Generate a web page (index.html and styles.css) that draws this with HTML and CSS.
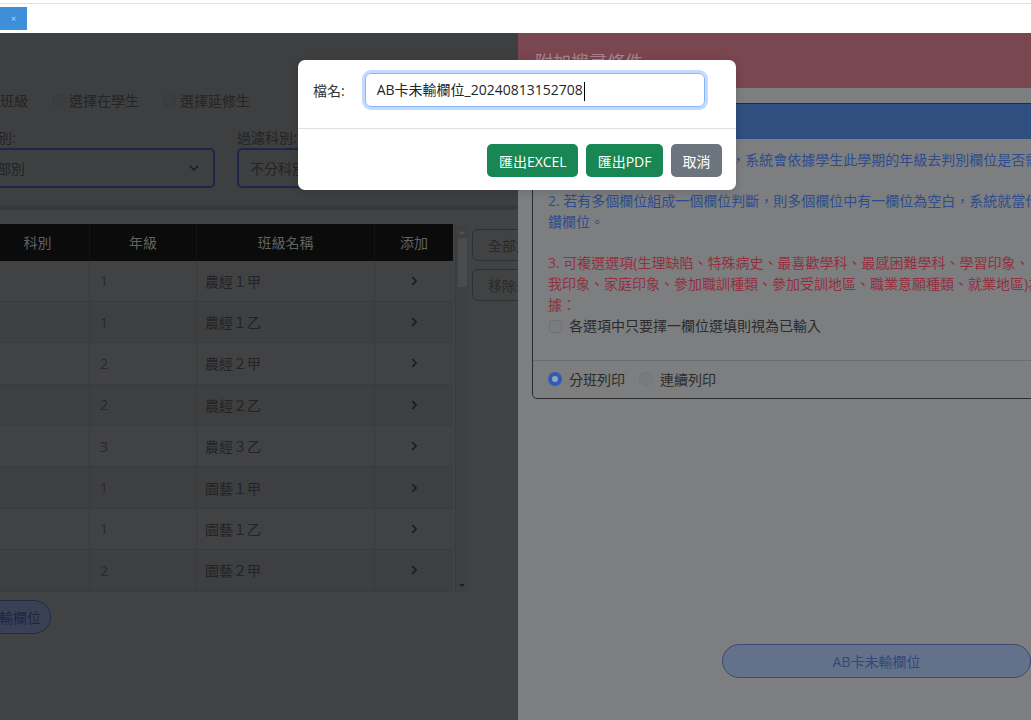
FILE: index.html
```html
<!DOCTYPE html>
<html lang="zh-Hant">
<head>
<meta charset="utf-8">
<title>AB卡未輸欄位</title>
<link rel="stylesheet" href="styles.css">
</head>
<body>
<div class="topbar">
  <div class="topbar-inner"><button class="xbtn">×</button></div>
</div>
<div class="main">
  <div class="left">
    <div class="left-inner">
      <div class="left-top">
        <div class="radios">
          <label class="ritem"><span class="rdot"></span>選擇班級</label>
          <label class="ritem"><span class="rdot"></span>選擇在學生</label>
          <label class="ritem"><span class="rdot"></span>選擇延修生</label>
        </div>
        <div class="filters">
          <div class="fcol">
            <div class="flabel">過濾部別:</div>
            <div class="fselect"><span>不分部別</span>
              <svg class="chev" width="10" height="6" viewBox="0 0 10 6"><path d="M1 1 L5 5 L9 1" fill="none" stroke="#1b1b1b" stroke-width="1.5"/></svg>
            </div>
          </div>
          <div class="fcol">
            <div class="flabel">過濾科別:</div>
            <div class="fselect"><span>不分科別</span>
              <svg class="chev" width="10" height="6" viewBox="0 0 10 6"><path d="M1 1 L5 5 L9 1" fill="none" stroke="#1b1b1b" stroke-width="1.5"/></svg>
            </div>
          </div>
        </div>
      </div>
      <div class="table-area">
        <div class="grid">
          <div class="grow ghead"><div>科別</div><div>年級</div><div>班級名稱</div><div>添加</div></div>
          <div class="grow"><div></div><div class="gr">1</div><div class="gn">農經１甲</div><div class="ga"><svg width="8" height="12" viewBox="0 0 8 12"><path d="M2.2 2 L6 6 L2.2 10" fill="none" stroke="#1c1c1c" stroke-width="1.7"/></svg></div></div>
          <div class="grow alt"><div></div><div class="gr">1</div><div class="gn">農經１乙</div><div class="ga"><svg width="8" height="12" viewBox="0 0 8 12"><path d="M2.2 2 L6 6 L2.2 10" fill="none" stroke="#1c1c1c" stroke-width="1.7"/></svg></div></div>
          <div class="grow"><div></div><div class="gr">2</div><div class="gn">農經２甲</div><div class="ga"><svg width="8" height="12" viewBox="0 0 8 12"><path d="M2.2 2 L6 6 L2.2 10" fill="none" stroke="#1c1c1c" stroke-width="1.7"/></svg></div></div>
          <div class="grow alt"><div></div><div class="gr">2</div><div class="gn">農經２乙</div><div class="ga"><svg width="8" height="12" viewBox="0 0 8 12"><path d="M2.2 2 L6 6 L2.2 10" fill="none" stroke="#1c1c1c" stroke-width="1.7"/></svg></div></div>
          <div class="grow"><div></div><div class="gr">3</div><div class="gn">農經３乙</div><div class="ga"><svg width="8" height="12" viewBox="0 0 8 12"><path d="M2.2 2 L6 6 L2.2 10" fill="none" stroke="#1c1c1c" stroke-width="1.7"/></svg></div></div>
          <div class="grow alt"><div></div><div class="gr">1</div><div class="gn">園藝１甲</div><div class="ga"><svg width="8" height="12" viewBox="0 0 8 12"><path d="M2.2 2 L6 6 L2.2 10" fill="none" stroke="#1c1c1c" stroke-width="1.7"/></svg></div></div>
          <div class="grow"><div></div><div class="gr">1</div><div class="gn">園藝１乙</div><div class="ga"><svg width="8" height="12" viewBox="0 0 8 12"><path d="M2.2 2 L6 6 L2.2 10" fill="none" stroke="#1c1c1c" stroke-width="1.7"/></svg></div></div>
          <div class="grow alt"><div></div><div class="gr">2</div><div class="gn">園藝２甲</div><div class="ga"><svg width="8" height="12" viewBox="0 0 8 12"><path d="M2.2 2 L6 6 L2.2 10" fill="none" stroke="#1c1c1c" stroke-width="1.7"/></svg></div></div>
        </div>
        <div class="vscroll">
          <span class="arrow-up"></span>
          <span class="thumb"></span>
          <span class="vspace"></span>
          <span class="arrow-down"></span>
        </div>
        <div class="side">
          <button class="sbtn">全部加入</button>
          <button class="sbtn">移除全部</button>
        </div>
      </div>
      <div class="lpill-row"><button class="lpill">AB卡未輸欄位</button></div>
    </div>
  </div>
  <div class="right">
    <div class="rhead">附加搜尋條件</div>
    <div class="card">
      <div class="card-head"></div>
      <div class="card-body">
        <div class="blue">1. 依年級判斷欄位是否需要填，系統會依據學生此學期的年級去判別欄位是否需</div>
        <div class="blue">要填寫此欄位。</div>
        <div class="blue">2. 若有多個欄位組成一個欄位判斷，則多個欄位中有一欄位為空白，系統就當作未填</div>
        <div class="blue">鑽欄位。</div>
        <div class="blank">&nbsp;</div>
        <div class="red">3. 可複選選項(生理缺陷、特殊病史、最喜歡學科、最感困難學科、學習印象、自</div>
        <div class="red">我印象、家庭印象、參加職訓種類、參加受訓地區、職業意願種類、就業地區)為判斷依</div>
        <div class="red">據：</div>
        <label class="chk"><span class="cbox"></span>各選項中只要擇一欄位選填則視為已輸入</label>
      </div>
      <div class="card-foot">
        <label class="fitem"><span class="frad on"></span>分班列印</label>
        <label class="fitem"><span class="frad"></span>連續列印</label>
      </div>
    </div>
    <div class="rbtn-row"><button class="rbtn">AB卡未輸欄位</button></div>
  </div>
</div>

<div class="modal">
  <div class="mbody">
    <span class="mlabel">檔名:</span>
    <div class="finput">AB卡未輸欄位_20240813152708<span class="caret"></span></div>
  </div>
  <div class="mfoot">
    <button class="btn green">匯出EXCEL</button>
    <button class="btn green">匯出PDF</button>
    <button class="btn gray">取消</button>
  </div>
</div>
</body>
</html>
```
FILE: styles.css
```css
* { box-sizing: border-box; }
html, body { margin: 0; padding: 0; }
body {
  width: 1031px;
  height: 720px;
  overflow: hidden;
  position: relative;
  background: #fff;
  font-family: "Open Sans", "Noto Sans CJK TC", sans-serif;
  font-size: 14px;
  color: #212529;
}
button { font-family: inherit; font-size: 14px; cursor: default; }

/* top strip */
.topbar { height: 33px; padding-top: 3px; background: #fff; }
.topbar-inner { height: 30px; border-top: 1px solid #e2e2e2; padding-top: 3px; }
.xbtn {
  display: block;
  width: 27px; height: 23px;
  border: none; padding: 0;
  background: #3d8fd8;
  color: #b9d6f3;
  font-size: 9px; line-height: 23px;
}

.main { display: flex; height: 687px; }

/* left panel */
.left { width: 518px; flex: none; overflow: hidden; background: #414243; }
.left-inner { margin-left: -44px; width: 620px; }
.left-top {
  background: #3e3f40;
  padding: 57px 0 17px;
  border-bottom: 5px solid #39393a;
}
.radios { display: flex; gap: 24px; margin-left: -1px; line-height: 21px; color: #242424; }
.ritem { display: flex; align-items: center; gap: 4px; }
.rdot {
  width: 13px; height: 13px; border-radius: 50%;
  border: 1px solid #38393a; background: #3c3d3e;
}
.filters { display: flex; gap: 22px; margin-top: 15.5px; }
.fcol { width: 259px; }
.flabel { line-height: 21px; color: #242424; }
.fselect {
  height: 40px;
  border: 2px solid #1e274b;
  border-radius: 5px;
  display: flex; align-items: center; justify-content: space-between;
  padding: 0 14px 0 11px;
  color: #242424;
}
.chev { display: block; }

.table-area { display: flex; align-items: flex-start; padding-top: 14px; margin-left: 30px; }
.grid { width: 467px; flex: none; }
.grow {
  display: grid;
  grid-template-columns: 104px 107px 178px 78px;
  height: 41.375px;
  border-bottom: 1px solid #3a3b3c;
  color: #262626;
}
.grow.alt { background: #3e3f40; }
.grow > div { border-right: 1px solid #393a3b; display: flex; align-items: center; }
.grow > div:last-child { border-right: none; }
.ghead { height: 37px; background: #0b0b0b; color: #626262; border-bottom: none; }
.ghead > div { justify-content: center; border-right-color: #141414; }
.gr { padding-left: 10px; color: #2c2828; }
.gn { padding-left: 8px; color: #232323; }
.ga { justify-content: center; }
.ga svg { display: block; }

.vscroll {
  width: 13px; height: 366px; margin: 2px 0 0 2px; flex: none;
  background: #3f4041;
  border-left: 1px solid #3a3b3c;
  display: flex; flex-direction: column; align-items: center;
}
.arrow-up {
  margin-top: 5px;
  width: 0; height: 0;
  border-left: 3px solid transparent; border-right: 3px solid transparent;
  border-bottom: 3px solid #555657;
}
.thumb { width: 9px; height: 49px; margin-top: 4px; background: #4a4b4c; border-radius: 1px; }
.vspace { flex: 1; }
.arrow-down {
  margin-bottom: 5px;
  width: 0; height: 0;
  border-left: 3px solid transparent; border-right: 3px solid transparent;
  border-top: 3px solid #1e1e1e;
}
.side { display: flex; flex-direction: column; gap: 8px; margin: 5px 0 0 4px; }
.sbtn {
  width: 90px; height: 32px;
  border: 1px solid #2e2f30; border-radius: 6px;
  background: transparent; color: #2a2a2a;
  padding: 0 0 0 15px; text-align: left;
  white-space: nowrap;
}
.lpill-row { margin: 8px 0 0 -21px; }
.lpill {
  height: 34px; width: 116px;
  border: 1.5px solid #232a47; border-radius: 17px;
  background: #3a4155; color: #1d2444;
  padding: 0 9px 0 14px;
  white-space: nowrap;
  text-align: right;
}

/* right panel */
.right { flex: 1; overflow: hidden; background: #7d7e80; }
.rhead {
  height: 55px;
  background: #7a4650;
  padding: 17px 0 0 17px;
  font-size: 18px; line-height: 24px;
  color: #a9848c;
}
.card {
  margin: 15px 0 0 14px;
  width: 580px;
  border: 1px solid #2b2b2b;
  border-radius: 5px;
}
.card-head { height: 35px; background: #2e4f80; border-radius: 4px 4px 0 0; }
.card-body { padding: 10.5px 15px 23px; line-height: 20.8px; white-space: nowrap; }
.blue { color: #2e4c8c; }
.red { color: #93303f; }
.chk { display: flex; align-items: center; gap: 7px; color: #2b2b2b; }
.cbox {
  width: 13px; height: 13px; margin-left: 1px;
  border: 1px solid #707173; border-radius: 3px; background: #7b7c7e;
}
.card-foot {
  border-top: 1px solid #6b6c6e;
  padding: 8px 15px;
  line-height: 21px;
  display: flex; gap: 14px;
  color: #2b2b2b;
}
.fitem { display: flex; align-items: center; gap: 7px; }
.frad {
  width: 14px; height: 14px; border-radius: 50%;
  border: 1px solid #747577; background: #7a7b7d;
}
.frad.on { border: 4px solid #2f5cb6; background: #9aa3b3; }
.rbtn-row { margin: 245px 0 0 204px; }
.rbtn {
  width: 309px; height: 34px;
  border: 1.5px solid #3b4a70; border-radius: 17px;
  background: #63728a; color: #34467a;
}

/* modal */
.modal {
  position: absolute; left: 298px; top: 60px;
  width: 438px; height: 130px;
  background: #fff;
  border-radius: 7px;
  box-shadow: 0 2px 10px rgba(0,0,0,.15);
}
.mbody {
  display: flex; align-items: center; gap: 20px;
  padding: 13px 15px 21px;
  border-bottom: 1px solid #dee2e6;
}
.mlabel { color: #333; line-height: 21px; }
.finput {
  width: 340px; height: 34px;
  border: 1px solid #86b7fe; border-radius: 6px;
  box-shadow: 0 0 0 3px rgba(13,110,253,.25);
  padding: 0 11px;
  line-height: 32px;
  font-size: 14px;
  color: #212529;
  white-space: nowrap;
}
.caret { display: inline-block; width: 1px; height: 19px; background: #000; vertical-align: middle; margin-left: 1px; }
.mfoot { display: flex; justify-content: flex-end; gap: 8px; padding: 15px 14px 0; }
.btn { height: 33px; padding: 0 11.5px; border: none; border-radius: 5px; color: #fff; white-space: nowrap; }
.green { background: #198754; }
.gray { background: #6c757d; }
```
